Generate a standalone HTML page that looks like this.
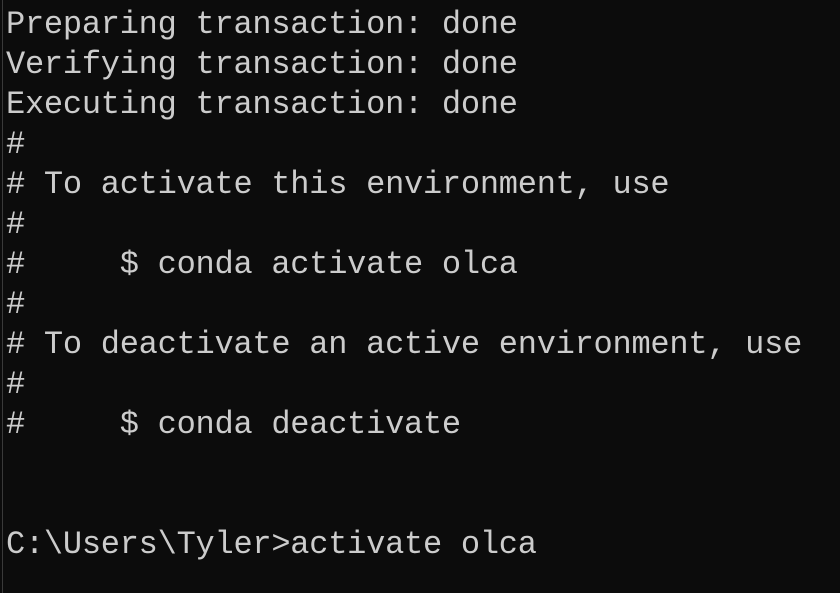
<!DOCTYPE html>
<html><head><style>
html,body{margin:0;padding:0;background:#0c0c0c;width:840px;height:593px;overflow:hidden}
.bar{position:absolute;left:2px;top:0;width:1px;height:593px;background:#3a3a3a}
pre{position:absolute;left:6px;top:5px;margin:0;font-family:"Liberation Mono",monospace;font-size:32px;letter-spacing:-0.25px;line-height:40px;color:#cccccc}
</style></head><body>
<div class="bar"></div>
<pre>Preparing transaction: done
Verifying transaction: done
Executing transaction: done
#
# To activate this environment, use
#
#     $ conda activate olca
#
# To deactivate an active environment, use
#
#     $ conda deactivate


C:\Users\Tyler&gt;activate olca</pre>
</body></html>
